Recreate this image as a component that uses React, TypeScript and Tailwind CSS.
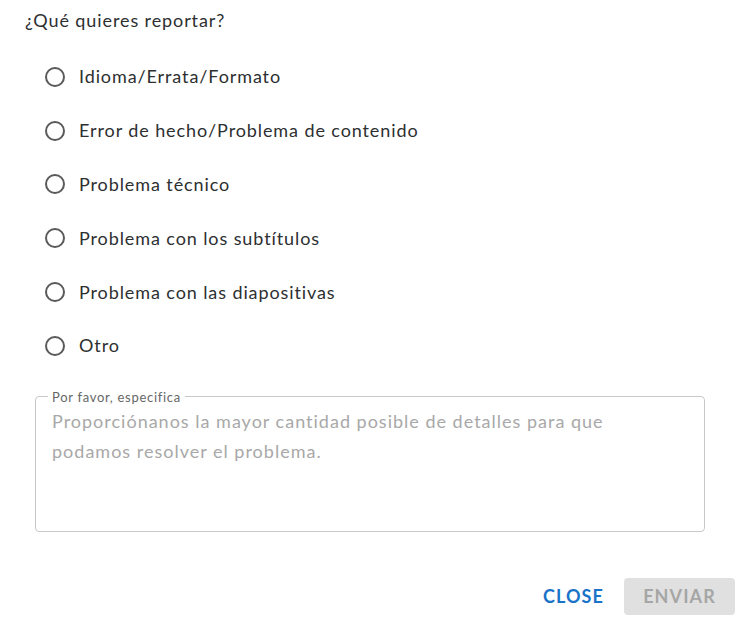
import React, { useState } from 'react';

const OPTIONS: string[] = [
  'Idioma/Errata/Formato',
  'Error de hecho/Problema de contenido',
  'Problema técnico',
  'Problema con los subtítulos',
  'Problema con las diapositivas',
  'Otro',
];

const App: React.FC = () => {
  const [selected, setSelected] = useState<number | null>(null);
  const [details, setDetails] = useState<string>('');

  return (
    <div className="w-[740px] h-[623px] bg-white text-[#2d2f31] tracking-[0.9px] font-['Lato','Liberation_Sans',sans-serif]">
      <div className="pl-[25px] pt-[7px] text-[18px] leading-[26px]">¿Qué quieres reportar?</div>

      <div className="mt-[17px] pl-[45px] flex flex-col">
        {OPTIONS.map((opt, i) => (
          <label
            key={opt}
            className="flex items-center h-[53.8px] cursor-pointer"
            onClick={() => setSelected(i)}
          >
            <span className="w-[20px] h-[20px] rounded-full border-2 border-[#5a5a5a] flex items-center justify-center">
              {selected === i && <span className="w-[10px] h-[10px] rounded-full bg-[#1a7bc9]" />}
            </span>
            <span className="ml-[14px] text-[18px]">{opt}</span>
          </label>
        ))}
      </div>

      <fieldset className="mx-[35px] mt-[16px] h-[143px] border border-[#c8c8c8] rounded-[4px] px-[16px] pt-0 pb-0">
        <legend className="px-[4px] -ml-[4px] text-[13px] leading-[16px] tracking-[0.7px] text-[#666]">Por favor, especifica</legend>
        <textarea
          value={details}
          onChange={(e) => setDetails(e.target.value)}
          placeholder="Proporciónanos la mayor cantidad posible de detalles para que podamos resolver el problema."
          className="block w-[580px] h-[110px] resize-none outline-none text-[18px] leading-[30px] tracking-[1px] placeholder:text-[#a8a8a8] mt-[1px]"
        />
      </fieldset>

      <div className="flex justify-end items-center pr-[5px] mt-[46px] gap-[10px]">
        <button className="px-[10px] h-[37px] text-[18px] font-bold tracking-[1.1px] text-[#1a73c8]">CLOSE</button>
        <button
          disabled
          className="w-[111px] h-[37px] rounded-[4px] bg-[#e0e0e0] text-[18px] font-bold tracking-[1.1px] text-[#a6a6a6]"
        >
          ENVIAR
        </button>
      </div>
    </div>
  );
};

export default App;
